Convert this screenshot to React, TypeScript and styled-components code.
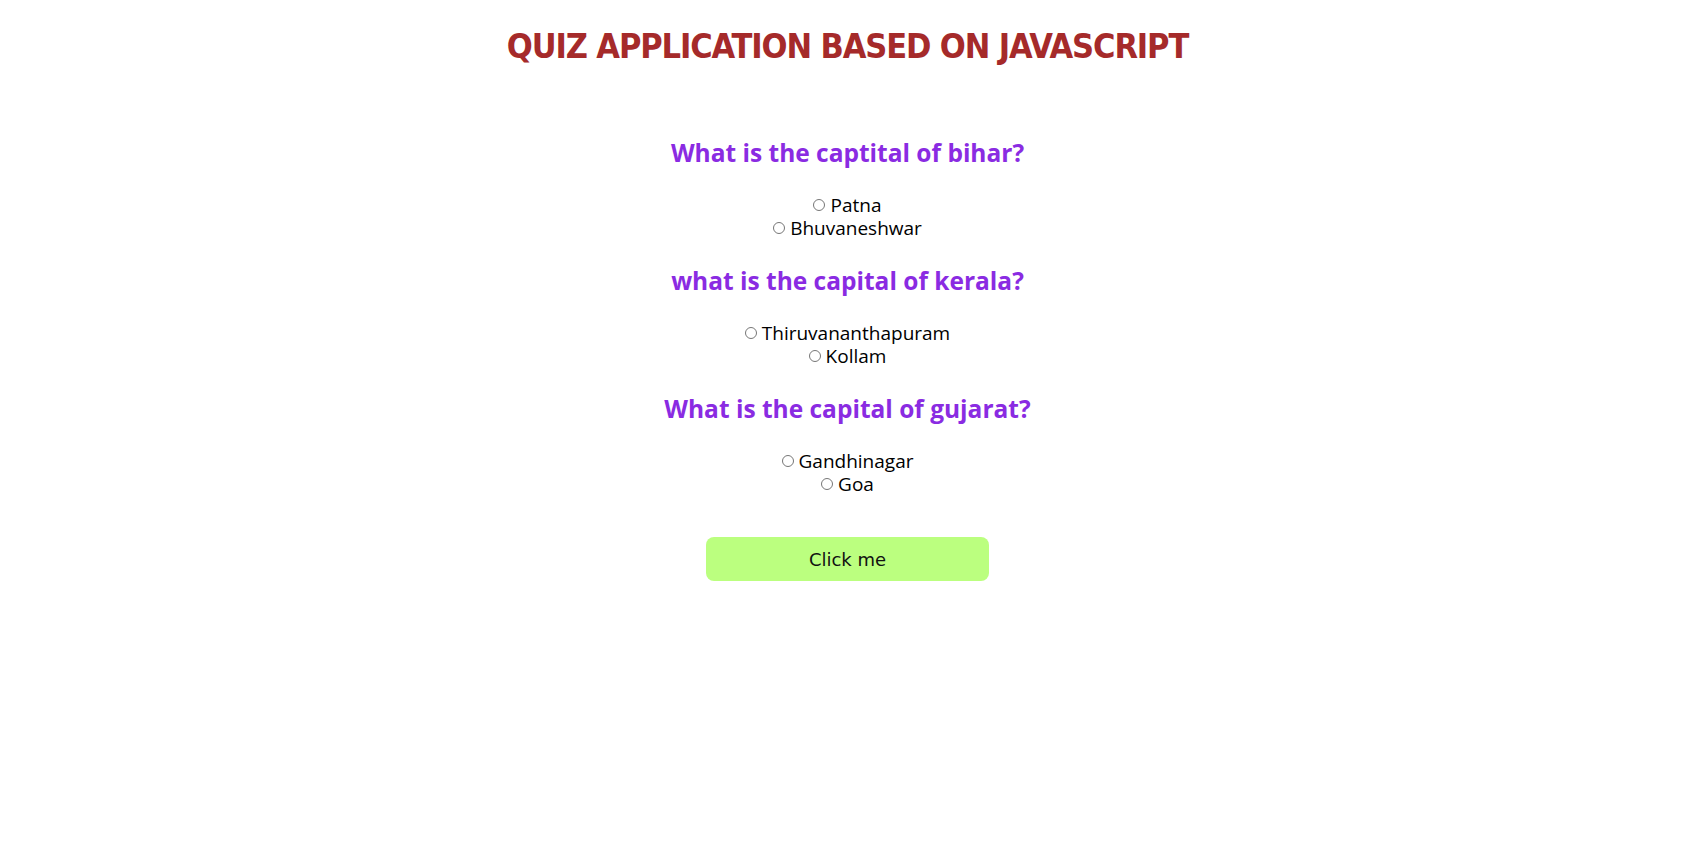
import React from "react";
import styled, { createGlobalStyle } from "styled-components";

const GlobalStyle = createGlobalStyle`
  body {
    margin: 8px;
    background: #ffffff;
    font-family: "DejaVu Sans", "Noto Sans", sans-serif;
  }
`;

const Page = styled.main`
  display: flex;
  flex-direction: column;
  align-items: center;
`;

const Title = styled.h1`
  margin: 18px 0 0;
  font-family: "DejaVu Sans Condensed", "Liberation Sans", sans-serif;
  font-stretch: condensed;
  font-weight: 700;
  font-size: 34px;
  line-height: 40px;
  letter-spacing: -1.1px;
  color: #a52a2a;
  text-align: center;
`;

const Quiz = styled.section`
  margin-top: 72px;
  display: flex;
  flex-direction: column;
  align-items: center;
  gap: 26px;
`;

const Block = styled.div`
  display: flex;
  flex-direction: column;
  align-items: center;
  gap: 26px;
`;

const Question = styled.h2`
  margin: 0;
  font-family: "Open Sans", "DejaVu Sans", sans-serif;
  font-weight: 700;
  font-size: 24.5px;
  line-height: 30px;
  color: #8a2be2;
  text-align: center;
`;

const Options = styled.div`
  display: flex;
  flex-direction: column;
  align-items: center;
`;

const Option = styled.label`
  display: flex;
  align-items: center;
  font-family: "Open Sans", "DejaVu Sans", sans-serif;
  font-size: 19px;
  line-height: 23px;
  color: #000;
`;

const Radio = styled.input.attrs({ type: "radio" })`
  width: 12px;
  height: 12px;
  margin: 0 5px 2px 0;
`;

const Button = styled.button`
  margin-top: 41px;
  width: 283px;
  height: 44px;
  border: none;
  border-radius: 8px;
  background: #bbff7f;
  font-family: "DejaVu Sans", sans-serif;
  font-size: 18px;
  color: #111;
  cursor: pointer;
`;

const questions = [
  { q: "What is the captital of bihar?", name: "q1", opts: ["Patna", "Bhuvaneshwar"] },
  { q: "what is the capital of kerala?", name: "q2", opts: ["Thiruvananthapuram", "Kollam"] },
  { q: "What is the capital of gujarat?", name: "q3", opts: ["Gandhinagar", "Goa"] },
];

export default function App() {
  return (
    <>
      <GlobalStyle />
      <Page>
        <Title>QUIZ APPLICATION BASED ON JAVASCRIPT</Title>
        <Quiz>
          {questions.map((item) => (
            <Block key={item.name}>
              <Question>{item.q}</Question>
              <Options>
                {item.opts.map((o) => (
                  <Option key={o}>
                    <Radio name={item.name} value={o} />
                    {o}
                  </Option>
                ))}
              </Options>
            </Block>
          ))}
        </Quiz>
        <Button>Click me</Button>
      </Page>
    </>
  );
}
